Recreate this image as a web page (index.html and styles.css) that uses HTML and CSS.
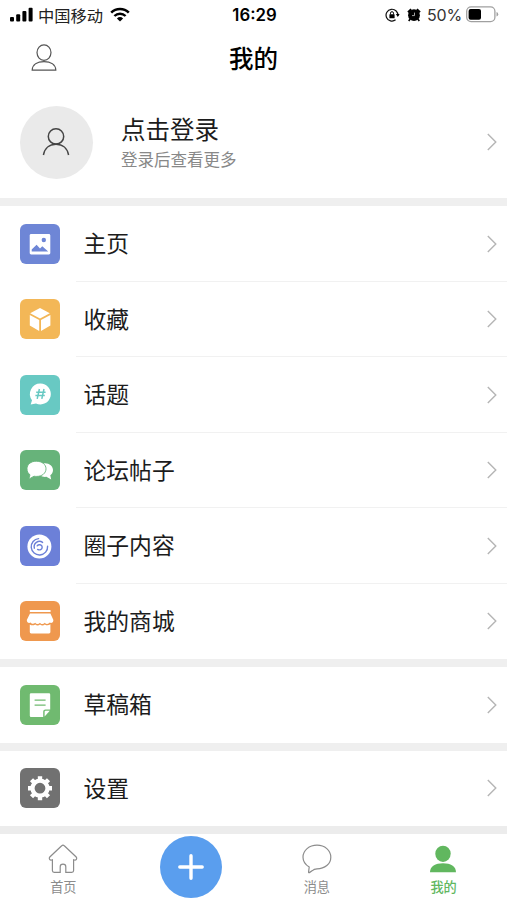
FILE: index.html
```html
<!DOCTYPE html>
<html lang="zh-CN">
<head>
    <meta charset="UTF-8">
    <meta name="viewport" content="width=device-width, initial-scale=1.0">
    <title>我的</title>
    <link rel="stylesheet" href="styles.css">
</head>
<body>
    <svg width="0" height="0" class="sprite">
        <symbol id="arrow" viewBox="0 0 12 20">
            <path d="M1.8 2 L9.8 10 L1.8 18" fill="none" stroke="#b5b5b5" stroke-width="1.4"/>
        </symbol>
    </svg>

    <div class="status-bar">
        <div class="status-left">
            <svg class="signal" width="23" height="16" viewBox="0 0 23 16">
                <rect x="0" y="10" width="4" height="4.5" rx="1"/>
                <rect x="6.2" y="7.2" width="4" height="7.3" rx="1"/>
                <rect x="12.4" y="4" width="4" height="10.5" rx="1"/>
                <rect x="18.6" y="0.8" width="4" height="13.7" rx="1"/>
            </svg>
            <span class="carrier">中国移动</span>
            <svg width="20" height="16" viewBox="0 0 20 16">
                <path d="M1.2 5.6 A12.6 12.6 0 0 1 18.8 5.6" fill="none" stroke="#000" stroke-width="2.6"/>
                <path d="M4.4 9 A8 8 0 0 1 15.6 9" fill="none" stroke="#000" stroke-width="2.4"/>
                <path d="M6.9 11.4 A4.6 4.6 0 0 1 13.1 11.4 L10 14.6 Z"/>
            </svg>
        </div>
        <div class="time">16:29</div>
        <div class="status-right">
            <svg width="15" height="14" viewBox="0 0 15 14">
                <path d="M10.6 11.8 A5.9 5.9 0 1 1 12.8 8" fill="none" stroke="#111" stroke-width="1.2"/>
                <path d="M10.9 5.9 H14.6 L12.8 8.9 Z"/>
                <rect x="4.4" y="6.2" width="5.2" height="4" rx="0.5"/>
                <path d="M5.5 6.5 V5.2 A1.5 1.5 0 0 1 8.5 5.2 V6.5" fill="none" stroke="#000"/>
            </svg>
            <svg class="alarm" width="14" height="14" viewBox="0 0 14 14">
                <circle cx="7" cy="7.2" r="5.9"/>
                <path d="M1 4.2 L4.2 1.2 M13 4.2 L9.8 1.2" stroke="#000" stroke-width="2"/>
                <path d="M3.2 11 L1.7 13 M10.8 11 L12.3 13" stroke="#000" stroke-width="1.6"/>
                <path d="M7.5 4.6 V7.6 H5" fill="none" stroke="#ccc" stroke-width="0.8"/>
            </svg>
            <span class="percent">50%</span>
            <svg class="battery" width="33" height="17" viewBox="0 0 33 17">
                <rect x="0.7" y="0.9" width="28.2" height="14.8" rx="4.4" fill="#fff" stroke="#a0a0a0" stroke-width="1.3"/>
                <rect x="2.6" y="2.9" width="12.4" height="10.8" rx="2"/>
                <path d="M30.5 6 Q32.2 6.6 32.2 8.3 Q32.2 10 30.5 10.6 Z" fill="#a0a0a0"/>
            </svg>
        </div>
    </div>

    <div class="header">
        <svg class="header-user" width="26" height="28" viewBox="0 0 26 28">
            <ellipse cx="13" cy="8.6" rx="7" ry="7.7"/>
            <path d="M1.2 26.1 C1.4 20.6 6.4 17.7 13 17.7 C19.6 17.7 24.6 20.6 24.8 26.1 Z"/>
        </svg>
        <h1>我的</h1>
    </div>

    <div class="profile">
        <div class="avatar">
            <svg width="28" height="30" viewBox="0 0 28 30">
                <circle cx="14" cy="9.4" r="7.7"/>
                <path d="M1.4 28 C2.6 21 7.6 17.2 14 17.2 C20.4 17.2 25.4 21 26.6 28"/>
            </svg>
        </div>
        <div class="profile-text">
            <div class="login">点击登录</div>
            <div class="login-tip">登录后查看更多</div>
        </div>
        <svg class="arrow"><use href="#arrow"/></svg>
    </div>

    <div class="menu">
        <div class="menu-item">
            <svg class="icon blue" viewBox="0 0 40 40">
                <rect x="9.7" y="10" width="20.6" height="20.4" rx="1.4" fill="#fff"/>
                <circle cx="23.8" cy="16" r="2.2" fill="#6e86d6"/>
                <path d="M11.7 27.4 V25.6 L16.6 20.8 L20 24.4 L22.3 22.3 L28.2 27.4 Z" fill="#6e86d6"/>
            </svg>
            <span class="label">主页</span>
            <svg class="arrow"><use href="#arrow"/></svg>
        </div>
        <div class="menu-item">
            <svg class="icon yellow" viewBox="0 0 40 40">
                <path d="M20 9 L29.8 14.2 L20 19.6 L10.2 14.2 Z" fill="#fff"/>
                <path d="M9.8 15.9 L19.2 21 V32 L9.8 26.6 Z M30.4 15.9 L21 21 V32 L30.4 26.6 Z" fill="#fff"/>
            </svg>
            <span class="label">收藏</span>
            <svg class="arrow"><use href="#arrow"/></svg>
        </div>
        <div class="menu-item">
            <svg class="icon teal" viewBox="0 0 40 40">
                <path d="M20.4 8.6 A10.4 10.4 0 1 1 16 28.4 L10.7 29.6 L12 25.2 A10.4 10.4 0 0 1 20.4 8.6 Z" fill="#fff"/>
                <path d="M19.4 14 L17.2 23.8 M24 14 L21.8 23.8 M16.2 17.2 H25.6 M15.4 20.6 H24.8" stroke="#68c9c3" stroke-width="1.5"/>
            </svg>
            <span class="label">话题</span>
            <svg class="arrow"><use href="#arrow"/></svg>
        </div>
        <div class="menu-item">
            <svg class="icon green" viewBox="0 0 40 40">
                <path d="M25 13.2 C29.6 13.2 33 16.2 33 20 C33 22.3 32 24 30.3 25.2 L31.2 29.6 L26.4 26.8 C22 27.4 18 25 17.6 20 C17.6 16 21 13.2 25 13.2 Z" fill="#fff"/>
                <path d="M16.2 11.2 C22 11.2 26 14.4 26 18.8 C26 23.2 22 26.4 16.8 26.4 C15.8 26.4 15 26.4 14 26.2 L8.8 29.2 L10 24.8 C8 23.4 7 21.4 7 18.8 C7 14.4 11 11.2 16.2 11.2 Z" fill="#fff" stroke="#67b37a" stroke-width="0.9"/>
            </svg>
            <span class="label">论坛帖子</span>
            <svg class="arrow"><use href="#arrow"/></svg>
        </div>
        <div class="menu-item">
            <svg class="icon indigo" viewBox="0 0 40 40">
                <circle cx="19.4" cy="20.6" r="12" fill="#fff"/>
                <path d="M18.6 12.6 A8.2 8.2 0 1 0 27.6 20.2" fill="none" stroke="#6c80d8" stroke-width="1.4" stroke-linecap="round"/>
                <path d="M14.4 22.2 A5.3 5.3 0 0 1 22.6 16.4" fill="none" stroke="#6c80d8" stroke-width="1.4" stroke-linecap="round"/>
                <path d="M17.2 19.8 C18.4 18 22 18.4 22.2 21 C22.2 23.4 19.8 24.6 17.6 23.4" fill="none" stroke="#6c80d8" stroke-width="1.4" stroke-linecap="round"/>
            </svg>
            <span class="label">圈子内容</span>
            <svg class="arrow"><use href="#arrow"/></svg>
        </div>
        <div class="menu-item">
            <svg class="icon orange" viewBox="0 0 40 40">
                <rect x="9.8" y="9" width="20.8" height="2" rx="0.6" fill="#fff"/>
                <path d="M10 12.4 H30.4 L33.4 19 C33.4 21.4 31.4 22.6 29.8 21.6 C28.4 23.4 26 23.4 24.8 21.8 C23.4 23.4 21 23.4 20 21.8 C18.6 23.4 16.4 23.4 15.2 21.8 C13.8 23.2 11.6 23.2 10.6 21.6 C8.8 22.6 6.8 21.4 6.8 19 Z" fill="#fff"/>
                <path d="M9.8 23.4 C11.6 24.6 13.6 24.6 15.2 23.4 C16.8 24.8 18.6 24.8 20 23.4 C21.6 24.8 23.4 24.8 24.8 23.4 C26.6 24.6 28.6 24.6 30.4 23.2 V31 Q30.4 32.4 29 32.4 H11.2 Q9.8 32.4 9.8 31 Z" fill="#fff"/>
            </svg>
            <span class="label">我的商城</span>
            <svg class="arrow"><use href="#arrow"/></svg>
        </div>
    </div>

    <div class="menu">
        <div class="menu-item">
            <svg class="icon leaf" viewBox="0 0 40 40">
                <path d="M11 8.2 H29 Q30.2 8.2 30.2 9.4 V24.4 H25.4 Q23.2 24.4 23.2 26.6 V32 H11 Q9.8 32 9.8 30.8 V9.4 Q9.8 8.2 11 8.2 Z" fill="#fff"/>
                <path d="M24.6 31.4 V27 Q24.6 25.8 25.8 25.8 H29.8 Z" fill="#fff"/>
                <path d="M14.6 15.2 H25.6 M14.6 20.2 H25.6" stroke="#70ba70" stroke-width="1.2"/>
            </svg>
            <span class="label">草稿箱</span>
            <svg class="arrow"><use href="#arrow"/></svg>
        </div>
    </div>

    <div class="menu">
        <div class="menu-item">
            <svg class="icon gray" viewBox="0 0 40 40">
                <circle cx="20" cy="20.2" r="7.5" fill="none" stroke="#fff" stroke-width="4.2"/>
                <path d="M20 8.2 V12 M20 28.4 V32.2 M8 20.2 H11.8 M28.2 20.2 H32 M11.5 11.7 L14.2 14.4 M25.8 26 L28.5 28.7 M28.5 11.7 L25.8 14.4 M14.2 26 L11.5 28.7" stroke="#fff" stroke-width="4.4"/>
            </svg>
            <span class="label">设置</span>
            <svg class="arrow"><use href="#arrow"/></svg>
        </div>
    </div>

    <div class="tab-bar">
        <div class="tab">
            <svg width="30" height="30" viewBox="0 0 30 30">
                <path d="M15 1.2 Q15.7 1.2 16.3 1.8 L28.2 13 Q29.2 14.2 28.4 15.4 Q27.6 16.4 25.6 15.8 V26.6 Q25.6 28.4 23.8 28.4 H17.8 V22.8 Q17.8 20.2 15 20.2 Q12.2 20.2 12.2 22.8 V28.4 H6.2 Q4.4 28.4 4.4 26.6 V15.8 Q2.4 16.4 1.6 15.4 Q0.8 14.2 1.8 13 L13.7 1.8 Q14.3 1.2 15 1.2 Z"/>
            </svg>
            <span>首页</span>
        </div>
        <div class="tab">
            <div class="add">
                <svg width="26" height="26" viewBox="0 0 26 26">
                    <path d="M13 1.8 V24.2 M1.8 13 H24.2"/>
                </svg>
            </div>
        </div>
        <div class="tab">
            <svg width="30" height="30" viewBox="0 0 30 30">
                <path d="M15 1.2 C22.8 1.2 28.8 6.4 28.8 13.2 C28.8 20 22.8 24.8 15 24.9 C13 25 11.6 25.4 10.4 26.6 L7.4 28.6 Q6.4 29 6.6 27.8 L7.2 23 C3 20.4 1 17.2 1 13.2 C1 6.4 7.2 1.2 15 1.2 Z"/>
            </svg>
            <span>消息</span>
        </div>
        <div class="tab active">
            <svg width="30" height="30" viewBox="0 0 30 30">
                <ellipse cx="14" cy="9.8" rx="7.7" ry="8.1"/>
                <path d="M1 28.3 C1 22.4 6.4 19.3 14 19.3 C21.6 19.3 27 22.4 27 28.3 Z"/>
            </svg>
            <span>我的</span>
        </div>
    </div>
</body>
</html>
```
FILE: styles.css
```css
* {
    box-sizing: border-box;
}

body {
    margin: 0;
    height: 900px;
    overflow: hidden;
    display: flex;
    flex-direction: column;
    background: #fff;
    color: #1c1c1c;
    font-family: "Noto Sans CJK SC", sans-serif;
}

svg {
    display: block;
    flex-shrink: 0;
}

.sprite {
    position: absolute;
}

/* status bar */
.status-bar {
    height: 29px;
    padding: 0 8px 0 10px;
    display: grid;
    grid-template-columns: 1fr auto 1fr;
    align-items: center;
    color: #000;
}

.status-left,
.status-right {
    display: flex;
    align-items: center;
}

.status-right {
    justify-content: flex-end;
}

.carrier {
    margin: 0 7px 0 5px;
    font-size: 16.3px;
    line-height: 24px;
    color: #222;
}

.time {
    font: 600 16.8px/24px Inter, sans-serif;
}

.alarm {
    margin-left: 7px;
}

.percent {
    margin: 0 4px 0 6px;
    font: 16px/24px Inter, sans-serif;
    letter-spacing: -0.2px;
    color: #333;
}

/* title */
.header {
    height: 57px;
    padding: 0 31px;
    display: grid;
    grid-template-columns: 1fr auto 1fr;
    align-items: center;
}

.header-user {
    fill: none;
    stroke: #555;
    stroke-width: 1.2;
}

.header h1 {
    margin: 0;
    font-size: 24.5px;
    font-weight: 500;
    line-height: 36px;
    color: #000;
}

/* login block */
.profile {
    height: 112px;
    padding: 0 9px 0 20px;
    display: flex;
    align-items: center;
}

.avatar {
    width: 73px;
    height: 73px;
    margin-right: 28px;
    padding-right: 1px;
    border-radius: 50%;
    background: #eaeaea;
    display: flex;
    align-items: center;
    justify-content: center;
}

.avatar svg {
    fill: none;
    stroke: #444;
    stroke-width: 1.5;
}

.profile-text {
    flex: 1;
}

.login {
    font-size: 24.5px;
    line-height: 34px;
}

.login-tip {
    font-size: 16.5px;
    line-height: 26px;
    color: #888;
}

.arrow {
    width: 12px;
    height: 20px;
}

/* menu */
.menu {
    border-top: 8px solid #efefef;
}

.menu-item {
    height: 75.5px;
    padding: 0 9px 0 20px;
    display: flex;
    align-items: center;
    background: linear-gradient(#f1f1f1, #f1f1f1) 76px 100% / 100% 1px no-repeat;
}

.menu-item:last-child {
    background: none;
}

.icon {
    width: 40px;
    height: 40px;
    margin-right: 23.5px;
    border-radius: 6px;
}

.label {
    flex: 1;
    padding-bottom: 1px;
    font-size: 22.8px;
    line-height: 34px;
}

.blue {
    background: #6e86d6;
}

.yellow {
    background: #f3b757;
}

.teal {
    background: #68c9c3;
}

.green {
    background: #67b37a;
}

.indigo {
    background: #6c80d8;
}

.orange {
    background: #ef984e;
}

.leaf {
    background: #70ba70;
}

.gray {
    background: #717171;
}

/* bottom tabs */
.tab-bar {
    flex: 1;
    border-top: 8px solid #ececec;
    display: grid;
    grid-template-columns: repeat(4, 1fr);
}

.tab {
    padding-top: 10px;
    display: flex;
    flex-direction: column;
    align-items: center;
    font-size: 13.2px;
    line-height: 20px;
    color: #8c8c8c;
}

.tab svg {
    margin-bottom: 3px;
    fill: none;
    stroke: #8c8c8c;
    stroke-width: 1.2;
}

.tab.active {
    color: #61b75f;
    font-weight: 500;
}

.tab.active svg {
    fill: #61b75f;
    stroke: none;
}

.add {
    width: 62px;
    height: 62px;
    margin: -8px 0 0 2px;
    border-radius: 50%;
    background: #5a9eee;
    display: flex;
    align-items: center;
    justify-content: center;
}

.add svg {
    margin: 0;
    stroke: #fff;
    stroke-width: 3.4;
    stroke-linecap: round;
}
```
